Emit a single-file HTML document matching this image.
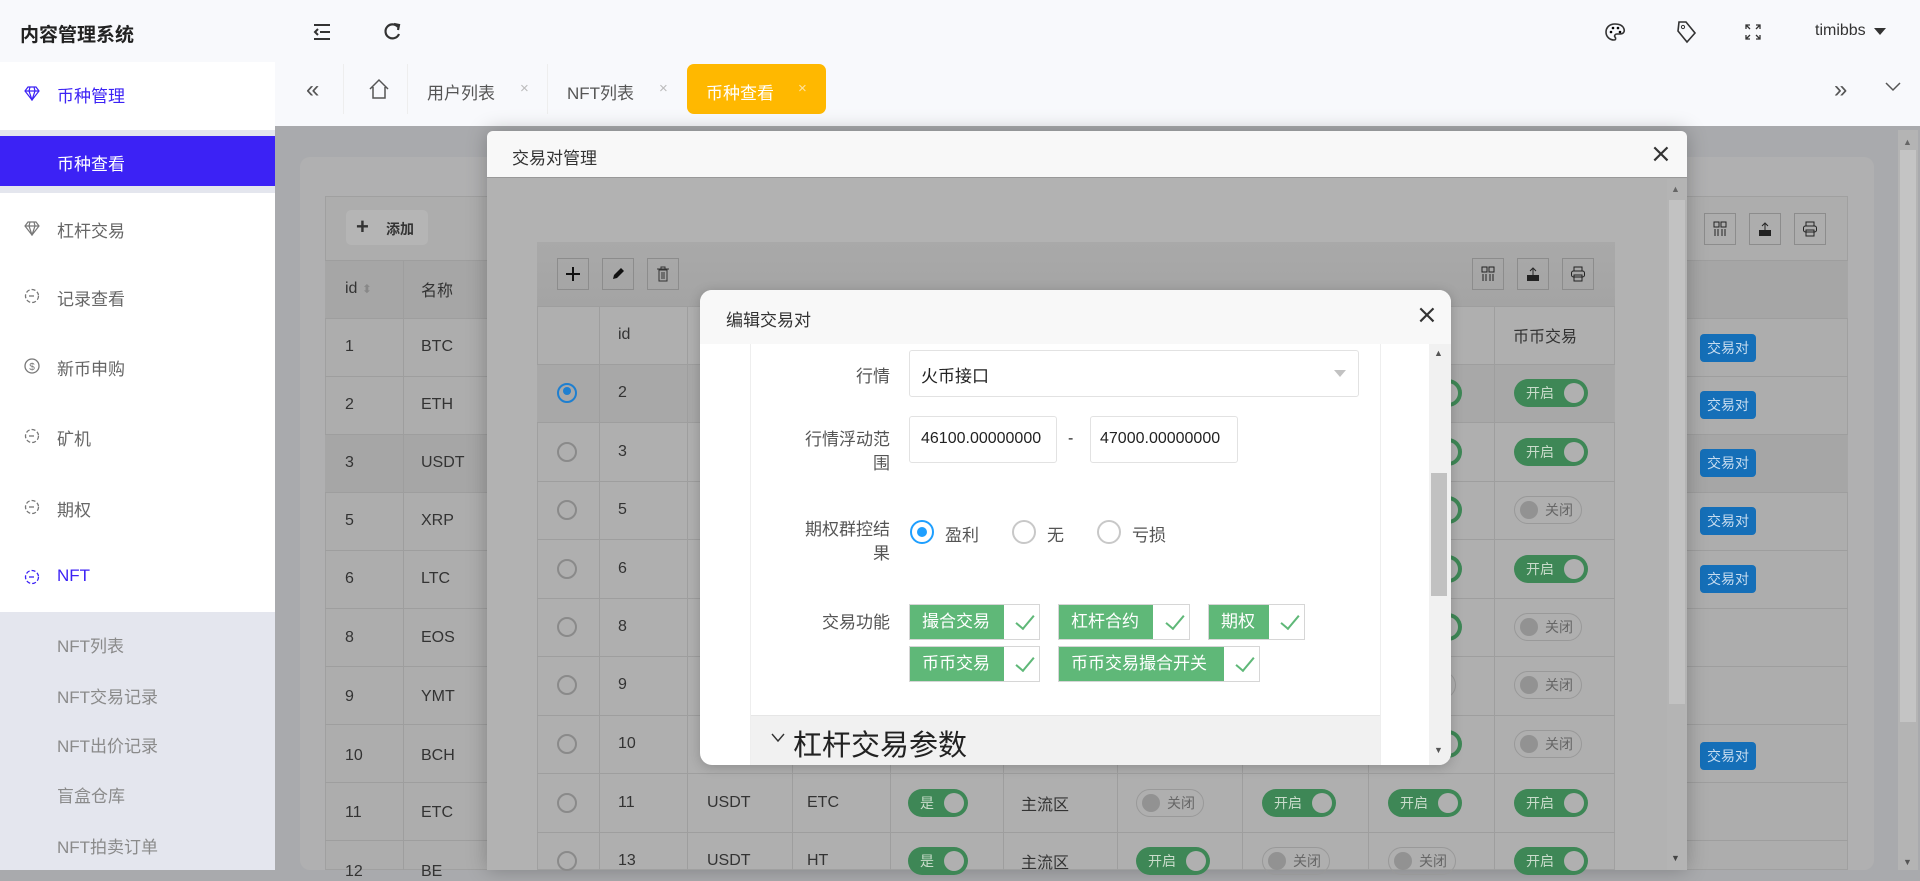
<!DOCTYPE html>
<html><head><meta charset="utf-8"><style>
*{margin:0;padding:0;box-sizing:border-box}
body{width:1920px;height:870px;overflow:hidden;position:relative;background:#a9aaad;font-family:"Liberation Sans","Noto Sans CJK SC",sans-serif;color:#333}
.a{position:absolute}
.sb{left:0;top:62px;width:275px;height:808px;background:#fff}
.si{position:absolute;left:0;width:275px;font-size:17px;color:#666;display:flex;align-items:center}
.si svg{position:absolute;left:24px}
.si span{position:absolute;left:57px}
.sub{background:#e4e6ee;top:612px;height:258px;left:0;width:275px}
.tb{font-size:16px;color:#333}
.ot{left:325px;width:1523px}
.cell{position:absolute;font-size:16px;color:#333;transform:translateY(-50%)}
.hl{position:absolute;height:1px;background:#9e9e9e}
.vl{position:absolute;width:1px;background:#9e9e9e}
.rad{position:absolute;width:20px;height:20px;border:2px solid #8a8a8a;border-radius:50%;transform:translateY(-50%)}
.on{position:absolute;width:74px;height:28px;border-radius:14px;background:#3e8756;color:#c9dccb;font-size:14px;line-height:28px;padding-left:12px;transform:translateY(-50%)}
.on:after{content:"";position:absolute;right:4px;top:4px;width:20px;height:20px;border-radius:50%;background:#b0b0b0}
.off{position:absolute;width:68px;height:28px;border-radius:14px;border:1px solid #999;color:#666;font-size:14px;line-height:26px;padding-left:30px;transform:translateY(-50%)}
.off:before{content:"";position:absolute;left:5px;top:4px;width:18px;height:18px;border-radius:50%;background:#929292}
.jy{position:absolute;left:1700px;width:56px;height:28px;background:#156fb8;border-radius:4px;color:#c7dcef;font-size:14px;line-height:28px;text-align:center;transform:translateY(-50%)}
.ibtn{position:absolute;width:32px;height:32px;border:1px solid #8c8c8c;display:flex;align-items:center;justify-content:center}
.lab{position:absolute;font-size:17px;color:#555;text-align:right;right:0;width:120px}
.tag{position:absolute;height:36px;border:1px solid #d6d6d6;background:#fff}
.tag b{display:block;height:34px;background:#5fb878;color:#fff;font-weight:normal;font-size:17px;line-height:34px;padding:0 12px;white-space:nowrap}
.tag i{position:absolute;right:9px;top:6px;width:10px;height:18px;border-right:2px solid #5fb878;border-bottom:2px solid #5fb878;transform:rotate(40deg)}
</style></head><body>

<!-- top header -->
<div class="a" style="left:0;top:0;width:1920px;height:126px;background:#f8f9fc"></div>
<div class="a" style="left:20px;top:20px;font-size:19px;font-weight:bold;color:#222">内容管理系统</div>
<svg class="a" style="left:312px;top:23px" width="20" height="18" viewBox="0 0 20 18"><path d="M2 2h16M8 9h10M2 16h16M6 6l-3 3 3 3" stroke="#333" stroke-width="2" fill="none"/></svg>
<svg class="a" style="left:383px;top:22px" width="18" height="20" viewBox="0 0 18 20"><path d="M15 5A7 7 0 1 0 16 12" stroke="#333" stroke-width="2.2" fill="none"/><path d="M11 2l5 1-1 5" stroke="#333" stroke-width="2.2" fill="none"/></svg>
<svg class="a" style="left:1604px;top:22px" width="22" height="20" viewBox="0 0 22 20"><path d="M11 2C5 2 2 6 2 10c0 5 4 8 8 8 2 0 2-2 1-3s0-3 2-3h3c3 0 5-2 4-5-1-3-4-5-9-5z" stroke="#333" stroke-width="1.6" fill="none"/><circle cx="7" cy="10" r="1.3"/><circle cx="9" cy="6" r="1.3"/><circle cx="14" cy="6" r="1.3"/><circle cx="16" cy="10" r="1.3"/></svg>
<svg class="a" style="left:1675px;top:20px" width="22" height="24" viewBox="0 0 22 24"><path d="M4 2h7l9 11-8 9L3 11z" stroke="#333" stroke-width="1.6" fill="none"/><circle cx="8" cy="7" r="1.6" stroke="#333" fill="none"/></svg>
<svg class="a" style="left:1745px;top:24px" width="16" height="16" viewBox="0 0 16 16"><path d="M1 5V1h4M11 1h4v4M15 11v4h-4M5 15H1v-4M1 1l4 4M15 1l-4 4M15 15l-4-4M1 15l4-4" stroke="#333" stroke-width="1.3" fill="none"/></svg>
<div class="a" style="left:1815px;top:22px;font-size:16px;color:#333">timibbs</div>
<div class="a" style="left:1874px;top:28px;border-left:6px solid transparent;border-right:6px solid transparent;border-top:7px solid #333"></div>

<!-- tabs -->
<div class="a" style="left:275px;top:64px;width:1645px;height:62px;background:#f8f9fc"></div>
<div class="a" style="left:306px;top:76px;font-size:24px;color:#555">«</div>
<div class="a" style="left:343px;top:64px;width:1px;height:50px;background:#eee"></div>
<svg class="a" style="left:368px;top:78px" width="22" height="22" viewBox="0 0 22 22"><path d="M2 11L11 2l9 9M5 9v11h12V9" stroke="#555" stroke-width="1.5" fill="none"/></svg>
<div class="a" style="left:407px;top:64px;width:1px;height:50px;background:#eee"></div>
<div class="a" style="left:427px;top:79px;font-size:17px;color:#555">用户列表</div>
<div class="a" style="left:520px;top:80px;font-size:15px;color:#bbb">×</div>
<div class="a" style="left:547px;top:64px;width:1px;height:50px;background:#eee"></div>
<div class="a" style="left:567px;top:79px;font-size:17px;color:#555">NFT列表</div>
<div class="a" style="left:659px;top:80px;font-size:15px;color:#bbb">×</div>
<div class="a" style="left:687px;top:64px;width:139px;height:50px;background:#ffb800;border-radius:7px"></div>
<div class="a" style="left:706px;top:79px;font-size:17px;color:#fff">币种查看</div>
<div class="a" style="left:798px;top:80px;font-size:15px;color:#ffe2a0">×</div>
<div class="a" style="left:1834px;top:76px;font-size:24px;color:#555">»</div>
<svg class="a" style="left:1885px;top:82px" width="16" height="10" viewBox="0 0 16 10"><path d="M1 1l7 7 7-7" stroke="#555" stroke-width="1.5" fill="none"/></svg>

<!-- sidebar -->
<div class="a sb"></div>
<div class="a" style="left:0;top:130px;width:275px;height:63px;background:#e4e6ee"></div>
<div class="a" style="left:0;top:136px;width:275px;height:50px;background:#3c22f5"></div>
<div class="si" style="top:93px"><svg width="16" height="16" viewBox="0 0 16 16" style="top:-8px"><path d="M4 2h8l3 4-7 9-7-9z M1 6h14M6 2l-1 4 3 9 3-9-1-4" stroke="#3c22f5" stroke-width="1.2" fill="none"/></svg><span style="color:#3c22f5;top:-11px">币种管理</span></div>
<div class="si" style="top:161px"><span style="color:#fff;top:-11px">币种查看</span></div>
<div class="si" style="top:228px"><svg width="16" height="16" viewBox="0 0 16 16" style="top:-8px"><path d="M4 2h8l3 4-7 9-7-9z M1 6h14M6 2l-1 4 3 9 3-9-1-4" stroke="#777" stroke-width="1.2" fill="none"/></svg><span style="top:-11px">杠杆交易</span></div>
<div class="si" style="top:296px"><svg width="16" height="16" viewBox="0 0 16 16" style="top:-8px"><circle cx="8" cy="8" r="6.5" stroke="#777" stroke-width="1.3" fill="none" stroke-dasharray="4 2"/><path d="M5 8h5" stroke="#777" stroke-width="1.3"/></svg><span style="top:-11px">记录查看</span></div>
<div class="si" style="top:366px"><svg width="16" height="18" viewBox="0 0 16 18" style="top:-9px"><circle cx="8" cy="9" r="7" stroke="#777" stroke-width="1.3" fill="none"/><text x="8" y="13" font-size="10" text-anchor="middle" fill="#777">$</text></svg><span style="top:-11px">新币申购</span></div>
<div class="si" style="top:436px"><svg width="16" height="16" viewBox="0 0 16 16" style="top:-8px"><circle cx="8" cy="8" r="6.5" stroke="#777" stroke-width="1.3" fill="none" stroke-dasharray="4 2"/><path d="M5 8h5" stroke="#777" stroke-width="1.3"/></svg><span style="top:-11px">矿机</span></div>
<div class="si" style="top:507px"><svg width="16" height="16" viewBox="0 0 16 16" style="top:-8px"><circle cx="8" cy="8" r="6.5" stroke="#777" stroke-width="1.3" fill="none" stroke-dasharray="4 2"/><path d="M5 8h5" stroke="#777" stroke-width="1.3"/></svg><span style="top:-11px">期权</span></div>
<div class="si" style="top:577px"><svg width="16" height="16" viewBox="0 0 16 16" style="top:-8px"><circle cx="8" cy="8" r="6.5" stroke="#3c22f5" stroke-width="1.3" fill="none" stroke-dasharray="4 2"/><path d="M5 8h5" stroke="#3c22f5" stroke-width="1.3"/></svg><span style="top:-11px;color:#3c22f5">NFT</span></div>
<div class="a sub"></div>
<div class="si" style="top:643px"><span style="top:-11px;color:#8a8a8a">NFT列表</span></div>
<div class="si" style="top:694px"><span style="top:-11px;color:#8a8a8a">NFT交易记录</span></div>
<div class="si" style="top:743px"><span style="top:-11px;color:#8a8a8a">NFT出价记录</span></div>
<div class="si" style="top:793px"><span style="top:-11px;color:#8a8a8a">盲盒仓库</span></div>
<div class="si" style="top:844px"><span style="top:-11px;color:#8a8a8a">NFT拍卖订单</span></div>

<!-- background page card & outer table -->
<div class="a" style="left:300px;top:157px;width:1574px;height:713px;background:#b0b0b1;border-radius:10px"></div>
<div class="a" style="left:325px;top:196px;width:1523px;height:674px;background:#adadad;border:1px solid #a0a0a0"></div>
<div class="a" style="left:325px;top:260px;width:1523px;height:58px;background:#a6a6a6"></div>
<div class="a" style="left:325px;top:434px;width:1523px;height:58px;background:#a6a6a6"></div>
<div class="a" style="left:346px;top:210px;width:82px;height:35px;background:#b5b5b5;border-radius:5px"></div>
<div class="a" style="left:356px;top:214px;font-size:22px;color:#333;font-weight:bold">+</div>
<div class="a" style="left:386px;top:219px;font-size:14px;color:#333;font-weight:bold">添加</div>
<div class="ibtn" style="left:1704px;top:213px"><svg width="14" height="16"><path d="M1 1h5v5H1zM8 1h5v5H8zM2 8v7M5 8v7M9 8v7M12 8v7" stroke="#222" fill="none"/></svg></div>
<div class="ibtn" style="left:1749px;top:213px"><svg width="16" height="16"><path d="M2 9h12v6H2z" fill="#222"/><path d="M8 9V3M5 5l3-3 3 3" stroke="#222" fill="none"/></svg></div>
<div class="ibtn" style="left:1794px;top:213px"><svg width="16" height="16"><rect x="4" y="1" width="8" height="4" stroke="#222" fill="none"/><rect x="1.5" y="5" width="13" height="6" rx="2" stroke="#222" fill="none"/><rect x="4" y="9" width="8" height="6" stroke="#222" fill="none"/></svg></div>
<div class="cell" style="left:345px;top:289px">id <span style="color:#888;font-size:12px">⬍</span></div>
<div class="cell" style="left:421px;top:289px">名称</div>
<div class="vl" style="left:403px;top:260px;height:610px"></div>
<div class="hl" style="left:325px;top:260px;width:1523px"></div>
<div class="hl" style="left:325px;top:318px;width:1523px"></div>
<div class="hl" style="left:325px;top:376px;width:1523px"></div>
<div class="hl" style="left:325px;top:434px;width:1523px"></div>
<div class="hl" style="left:325px;top:492px;width:1523px"></div>
<div class="hl" style="left:325px;top:550px;width:1523px"></div>
<div class="hl" style="left:325px;top:608px;width:1523px"></div>
<div class="hl" style="left:325px;top:666px;width:1523px"></div>
<div class="hl" style="left:325px;top:724px;width:1523px"></div>
<div class="hl" style="left:325px;top:782px;width:1523px"></div>
<div class="hl" style="left:325px;top:840px;width:1523px"></div>
<div class="cell" style="left:345px;top:347px">1</div><div class="cell" style="left:421px;top:347px">BTC</div>
<div class="cell" style="left:345px;top:405px">2</div><div class="cell" style="left:421px;top:405px">ETH</div>
<div class="cell" style="left:345px;top:463px">3</div><div class="cell" style="left:421px;top:463px">USDT</div>
<div class="cell" style="left:345px;top:521px">5</div><div class="cell" style="left:421px;top:521px">XRP</div>
<div class="cell" style="left:345px;top:579px">6</div><div class="cell" style="left:421px;top:579px">LTC</div>
<div class="cell" style="left:345px;top:638px">8</div><div class="cell" style="left:421px;top:638px">EOS</div>
<div class="cell" style="left:345px;top:697px">9</div><div class="cell" style="left:421px;top:697px">YMT</div>
<div class="cell" style="left:345px;top:756px">10</div><div class="cell" style="left:421px;top:756px">BCH</div>
<div class="cell" style="left:345px;top:813px">11</div><div class="cell" style="left:421px;top:813px">ETC</div>
<div class="cell" style="left:345px;top:872px">12</div><div class="cell" style="left:421px;top:872px">BE</div>
<div class="jy" style="top:348px">交易对</div>
<div class="jy" style="top:405px">交易对</div>
<div class="jy" style="top:463px">交易对</div>
<div class="jy" style="top:521px">交易对</div>
<div class="jy" style="top:579px">交易对</div>
<div class="jy" style="top:756px">交易对</div>
<!-- page scrollbar -->
<div class="a" style="left:1898px;top:130px;width:20px;height:740px;background:#b4b4b4"></div>
<div class="a" style="left:1900px;top:150px;width:16px;height:572px;background:#c4c4c4"></div>
<div class="a" style="left:1903px;top:137px;font-size:9px;color:#666">▲</div>
<div class="a" style="left:1903px;top:857px;font-size:9px;color:#555">▼</div>

<!-- modal 1 -->
<div class="a" style="left:487px;top:131px;width:1200px;height:739px;background:#b2b2b2;border-radius:6px 6px 0 0;box-shadow:0 0 20px rgba(0,0,0,.25);overflow:hidden">
  <div class="a" style="left:0;top:0;width:1200px;height:47px;background:#f8f8f8;border-bottom:1px solid #999"></div>
  <div class="a" style="left:25px;top:13px;font-size:17px;color:#333">交易对管理</div>
  <div class="a" style="left:1163px;top:8px;font-size:26px;color:#333;font-family:'DejaVu Sans',sans-serif">×</div>
  <div class="a" style="left:1180px;top:48px;width:20px;height:691px;background:#b4b4b4"></div>
  <div class="a" style="left:1182px;top:69px;width:16px;height:504px;background:#c2c2c2"></div>
  <div class="a" style="left:1184px;top:53px;font-size:9px;color:#666">▲</div>
  <div class="a" style="left:1184px;top:722px;font-size:9px;color:#444">▼</div>
</div>
<!-- inner table -->
<div class="a" style="left:537px;top:242px;width:1078px;height:628px;background:#afafaf;border:1px solid #a0a0a0"></div>
<div class="a" style="left:537px;top:242px;width:1078px;height:64px;background:linear-gradient(#a9a9a9,#a4a4a4)"></div>
<div class="ibtn" style="left:557px;top:258px"><svg width="16" height="16"><path d="M8 1v14M1 8h14" stroke="#111" stroke-width="2"/></svg></div>
<div class="ibtn" style="left:602px;top:258px"><svg width="14" height="14"><path d="M2 12l1-4 7-7 3 3-7 7z" fill="#111"/></svg></div>
<div class="ibtn" style="left:647px;top:258px"><svg width="14" height="16"><path d="M1 3h12M5 3V1h4v2M3 4h8v11H3zM6 6v7M8 6v7" stroke="#333" fill="none"/></svg></div>
<div class="ibtn" style="left:1472px;top:258px"><svg width="14" height="16"><path d="M1 1h5v5H1zM8 1h5v5H8zM2 8v7M5 8v7M9 8v7M12 8v7" stroke="#222" fill="none"/></svg></div>
<div class="ibtn" style="left:1517px;top:258px"><svg width="16" height="16"><path d="M2 9h12v6H2z" fill="#222"/><path d="M8 9V3M5 5l3-3 3 3" stroke="#222" fill="none"/></svg></div>
<div class="ibtn" style="left:1562px;top:258px"><svg width="16" height="16"><rect x="4" y="1" width="8" height="4" stroke="#222" fill="none"/><rect x="1.5" y="5" width="13" height="6" rx="2" stroke="#222" fill="none"/><rect x="4" y="9" width="8" height="6" stroke="#222" fill="none"/></svg></div>
<div class="a" style="left:537px;top:364px;width:1078px;height:58px;background:#a8a8a8"></div>
<div class="hl" style="left:537px;top:306px;width:1078px"></div>
<div class="hl" style="left:537px;top:364px;width:1078px"></div>
<div class="hl" style="left:537px;top:422px;width:1078px"></div>
<div class="hl" style="left:537px;top:481px;width:1078px"></div>
<div class="hl" style="left:537px;top:539px;width:1078px"></div>
<div class="hl" style="left:537px;top:598px;width:1078px"></div>
<div class="hl" style="left:537px;top:656px;width:1078px"></div>
<div class="hl" style="left:537px;top:715px;width:1078px"></div>
<div class="hl" style="left:537px;top:773px;width:1078px"></div>
<div class="hl" style="left:537px;top:832px;width:1078px"></div>
<div class="vl" style="left:599px;top:306px;height:564px"></div>
<div class="vl" style="left:687px;top:306px;height:564px"></div>
<div class="vl" style="left:792px;top:306px;height:564px"></div>
<div class="vl" style="left:890px;top:306px;height:564px"></div>
<div class="vl" style="left:1003px;top:306px;height:564px"></div>
<div class="vl" style="left:1117px;top:306px;height:564px"></div>
<div class="vl" style="left:1242px;top:306px;height:564px"></div>
<div class="vl" style="left:1368px;top:306px;height:564px"></div>
<div class="vl" style="left:1494px;top:306px;height:564px"></div>
<div class="cell" style="left:618px;top:335px">id</div>
<div class="cell" style="left:1513px;top:335px">币币交易</div>
<!-- radios & ids -->
<div class="rad" style="left:557px;top:393px;border-color:#1e7fd0"></div><div class="a" style="left:563px;top:387px;width:8px;height:8px;border-radius:50%;background:#1e7fd0"></div>
<div class="cell" style="left:618px;top:393px">2</div>
<div class="rad" style="left:557px;top:452px"></div><div class="cell" style="left:618px;top:452px">3</div>
<div class="rad" style="left:557px;top:510px"></div><div class="cell" style="left:618px;top:510px">5</div>
<div class="rad" style="left:557px;top:569px"></div><div class="cell" style="left:618px;top:569px">6</div>
<div class="rad" style="left:557px;top:627px"></div><div class="cell" style="left:618px;top:627px">8</div>
<div class="rad" style="left:557px;top:685px"></div><div class="cell" style="left:618px;top:685px">9</div>
<div class="rad" style="left:557px;top:744px"></div><div class="cell" style="left:618px;top:744px">10</div>
<div class="rad" style="left:557px;top:803px"></div><div class="cell" style="left:618px;top:803px">11</div>
<div class="rad" style="left:557px;top:861px"></div><div class="cell" style="left:618px;top:861px">13</div>
<div class="cell" style="left:707px;top:803px">USDT</div><div class="cell" style="left:807px;top:803px">ETC</div>
<div class="on" style="left:908px;top:803px;width:60px">是</div><div class="cell" style="left:1021px;top:803px">主流区</div>
<div class="off" style="left:1136px;top:803px">关闭</div><div class="on" style="left:1262px;top:803px">开启</div><div class="on" style="left:1388px;top:803px">开启</div><div class="on" style="left:1514px;top:803px">开启</div>
<div class="cell" style="left:707px;top:861px">USDT</div><div class="cell" style="left:807px;top:861px">HT</div>
<div class="on" style="left:908px;top:861px;width:60px">是</div><div class="cell" style="left:1021px;top:861px">主流区</div>
<div class="on" style="left:1136px;top:861px">开启</div><div class="off" style="left:1262px;top:861px">关闭</div><div class="off" style="left:1388px;top:861px">关闭</div><div class="on" style="left:1514px;top:861px">开启</div>
<div class="on" style="left:1388px;top:393px">开启</div><div class="on" style="left:1514px;top:393px">开启</div>
<div class="on" style="left:1388px;top:452px">开启</div><div class="on" style="left:1514px;top:452px">开启</div>
<div class="on" style="left:1388px;top:510px">开启</div><div class="off" style="left:1514px;top:510px">关闭</div>
<div class="on" style="left:1388px;top:569px">开启</div><div class="on" style="left:1514px;top:569px">开启</div>
<div class="on" style="left:1388px;top:627px">开启</div><div class="off" style="left:1514px;top:627px">关闭</div>
<div class="off" style="left:1388px;top:685px">关闭</div><div class="off" style="left:1514px;top:685px">关闭</div>
<div class="on" style="left:1388px;top:744px">开启</div><div class="off" style="left:1514px;top:744px">关闭</div>

<!-- edit modal -->
<div class="a" style="left:700px;top:290px;width:751px;height:475px;background:#fff;border-radius:12px;overflow:hidden;box-shadow:0 2px 12px rgba(0,0,0,.2)">
  <div class="a" style="left:0;top:0;width:751px;height:54px;background:#f8f8f8"></div>
  <div class="a" style="left:26px;top:16px;font-size:17px;color:#333">编辑交易对</div>
  <div class="a" style="left:716px;top:10px;font-size:26px;color:#333;font-family:'DejaVu Sans',sans-serif">×</div>
  <div class="a" style="left:50px;top:54px;width:1px;height:421px;background:#eee"></div>
  <div class="a" style="left:680px;top:54px;width:1px;height:421px;background:#eee"></div>
  <div class="a" style="left:729px;top:54px;width:22px;height:421px;background:#f1f1f1"></div>
  <div class="a" style="left:731px;top:183px;width:16px;height:123px;background:#c1c1c1"></div>
  <div class="a" style="left:734px;top:58px;font-size:9px;color:#555">▲</div>
  <div class="a" style="left:734px;top:455px;font-size:9px;color:#555">▼</div>
  <div class="a" style="left:51px;top:425px;width:629px;height:50px;background:#f1f1f1;border-top:1px solid #e6e6e6"></div>
  <svg class="a" style="left:71px;top:443px" width="14" height="10" viewBox="0 0 14 10"><path d="M1 1l6 7 6-7" stroke="#333" stroke-width="1.4" fill="none"/></svg>
  <div class="a" style="left:93px;top:432px;font-size:29px;color:#222">杠杆交易参数</div>
</div>
<div class="a" style="left:770px;top:360px;width:120px;height:120px">
  <div class="lab" style="top:2px">行情</div>
  <div class="lab" style="top:68px;line-height:24px">行情浮动范<br>围</div>
</div>
<div class="a" style="left:770px;top:518px;width:120px;height:140px">
  <div class="lab" style="top:0;line-height:24px">期权群控结<br>果</div>
  <div class="lab" style="top:90px">交易功能</div>
</div>
<div class="a" style="left:909px;top:350px;width:450px;height:47px;border:1px solid #e2e2e2;border-radius:3px"></div>
<div class="a" style="left:921px;top:362px;font-size:17px;color:#222">火币接口</div>
<div class="a" style="left:1334px;top:370px;border-left:6px solid transparent;border-right:6px solid transparent;border-top:7px solid #c2c2c2"></div>
<div class="a" style="left:909px;top:416px;width:148px;height:47px;border:1px solid #e2e2e2;border-radius:3px"></div>
<div class="a" style="left:921px;top:430px;font-size:16px;color:#222">46100.00000000</div>
<div class="a" style="left:1068px;top:430px;font-size:16px;color:#222">-</div>
<div class="a" style="left:1090px;top:416px;width:148px;height:47px;border:1px solid #e2e2e2;border-radius:3px"></div>
<div class="a" style="left:1100px;top:430px;font-size:16px;color:#222">47000.00000000</div>
<div class="a" style="left:910px;top:520px;width:24px;height:24px;border:2px solid #1e9fff;border-radius:50%"></div>
<div class="a" style="left:917px;top:527px;width:10px;height:10px;border-radius:50%;background:#1e9fff"></div>
<div class="a" style="left:945px;top:521px;font-size:17px;color:#555">盈利</div>
<div class="a" style="left:1012px;top:520px;width:24px;height:24px;border:2px solid #c8c8c8;border-radius:50%"></div>
<div class="a" style="left:1047px;top:521px;font-size:17px;color:#555">无</div>
<div class="a" style="left:1097px;top:520px;width:24px;height:24px;border:2px solid #c8c8c8;border-radius:50%"></div>
<div class="a" style="left:1132px;top:521px;font-size:17px;color:#555">亏损</div>
<div class="tag" style="left:909px;top:604px;width:131px"><b style="width:94px">撮合交易</b><i></i></div>
<div class="tag" style="left:1058px;top:604px;width:132px"><b style="width:94px">杠杆合约</b><i></i></div>
<div class="tag" style="left:1208px;top:604px;width:97px"><b style="width:60px">期权</b><i></i></div>
<div class="tag" style="left:909px;top:646px;width:131px"><b style="width:94px">币币交易</b><i></i></div>
<div class="tag" style="left:1058px;top:646px;width:202px"><b style="width:165px">币币交易撮合开关</b><i></i></div>
</body></html>
